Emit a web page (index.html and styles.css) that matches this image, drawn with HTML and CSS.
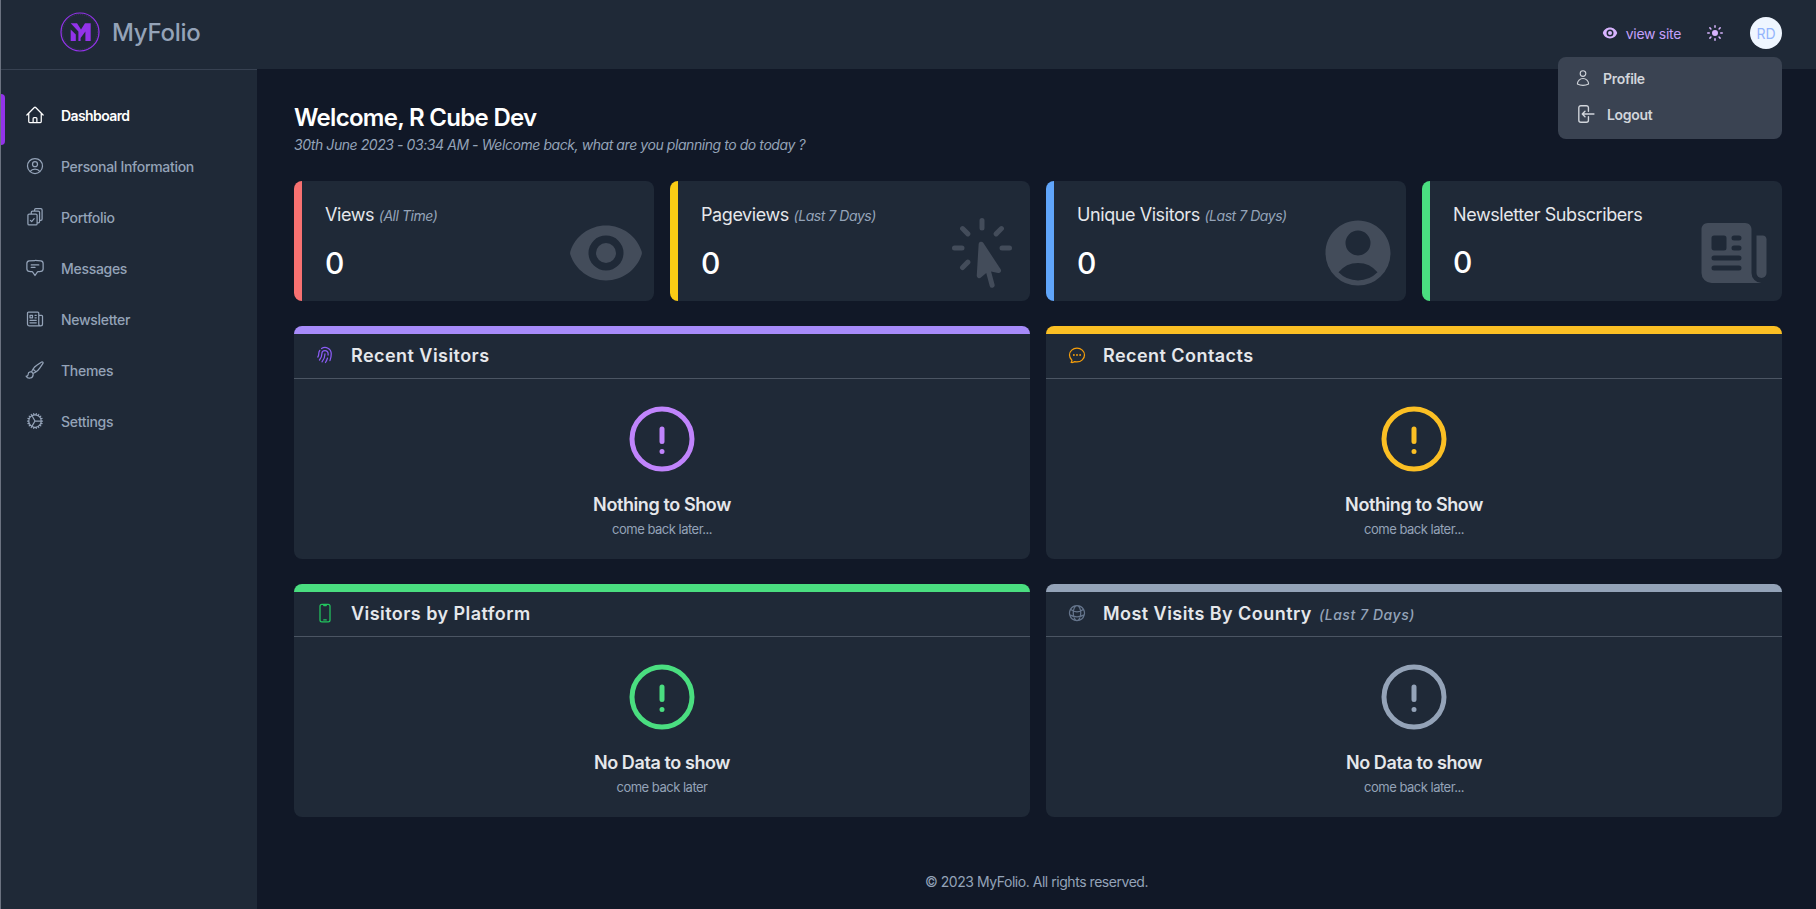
FILE: index.html
```html
<!DOCTYPE html>
<html lang="en">
<head>
    <meta charset="UTF-8">
    <meta name="viewport" content="width=device-width, initial-scale=1.0">
    <title>MyFolio - Dashboard</title>
    <link rel="stylesheet" href="styles.css">
</head>
<body>
    <aside class="sidebar">
        <div class="brand">
            <svg class="brand-logo" viewBox="0 0 40 40">
                <circle cx="20" cy="20" r="19" fill="none" stroke="#9333ea" stroke-width="1.2"/>
                <circle cx="20" cy="20" r="17.5" fill="none" stroke="#4b3a6b" stroke-width="0.6" stroke-dasharray="1 1"/>
                <polygon fill="#9333ea" points="10.7,17.5 15.8,22.5 15.8,29 10.7,29"/>
                <polygon fill="#9333ea" points="10.7,11.3 17,11.3 21,17.5 25,11.3 30.7,11.3 30.7,29 25.4,29 25.4,19.5 20.6,26 20.6,29 18.4,29 18.4,19.5"/>
            </svg>
            <span class="brand-name">MyFolio</span>
        </div>
        <nav class="nav">
            <a class="nav-item active">
                <svg class="icon" viewBox="0 0 24 24"><path d="M2.25 12l8.954-8.955c.44-.439 1.152-.439 1.591 0L21.75 12M4.5 9.75v10.125c0 .621.504 1.125 1.125 1.125H9.75v-4.875c0-.621.504-1.125 1.125-1.125h2.25c.621 0 1.125.504 1.125 1.125V21h4.125c.621 0 1.125-.504 1.125-1.125V9.75M8.25 21h8.25"/></svg>
                Dashboard
            </a>
            <a class="nav-item">
                <svg class="icon" viewBox="0 0 24 24"><path d="M17.982 18.725A7.488 7.488 0 0012 15.75a7.488 7.488 0 00-5.982 2.975m11.963 0a9 9 0 10-11.963 0m11.963 0A8.966 8.966 0 0112 21a8.966 8.966 0 01-5.982-2.275M15 9.75a3 3 0 11-6 0 3 3 0 016 0z"/></svg>
                Personal Information
            </a>
            <a class="nav-item">
                <svg class="icon" viewBox="0 0 24 24"><path d="M5 8.5h8a1.5 1.5 0 011.5 1.5v10a1.5 1.5 0 01-1.5 1.5H5A1.5 1.5 0 013.5 20V10A1.5 1.5 0 015 8.5zM6.5 16l1.5 1.5 3-3.5M7.5 8.5V6.5A1.5 1.5 0 019 5h7a1.5 1.5 0 011.5 1.5v11A1.5 1.5 0 0116 19h-1.5M11.5 5V3.5A1.5 1.5 0 0113 2h6a1.5 1.5 0 011.5 1.5v11A1.5 1.5 0 0119 16h-1.5"/></svg>
                Portfolio
            </a>
            <a class="nav-item">
                <svg class="icon" viewBox="0 0 24 24"><path d="M7.5 8.25h9m-9 3H12m-9.75 1.51c0 1.6 1.123 2.994 2.707 3.227 1.129.166 2.27.293 3.423.379.35.026.67.21.865.501L12 21l2.755-4.133a1.14 1.14 0 01.865-.501 48.172 48.172 0 003.423-.379c1.584-.233 2.707-1.626 2.707-3.228V6.741c0-1.602-1.123-2.995-2.707-3.228A48.394 48.394 0 0012 3c-2.392 0-4.744.175-7.043.513C3.373 3.746 2.25 5.14 2.25 6.741v6.018z"/></svg>
                Messages
            </a>
            <a class="nav-item">
                <svg class="icon" viewBox="0 0 24 24"><path d="M12 7.5h1.5m-1.5 3h1.5m-7.5 3h7.5m-7.5 3h7.5m3-9h3.375c.621 0 1.125.504 1.125 1.125V18a2.25 2.25 0 01-2.25 2.25M16.5 7.5V18a2.25 2.25 0 002.25 2.25M16.5 7.5V4.875c0-.621-.504-1.125-1.125-1.125H4.125C3.504 3.75 3 4.254 3 4.875V18a2.25 2.25 0 002.25 2.25h13.5M6 7.5h3v3H6v-3z"/></svg>
                Newsletter
            </a>
            <a class="nav-item">
                <svg class="icon" viewBox="0 0 24 24"><path d="M9.53 16.122a3 3 0 00-5.78 1.128 2.25 2.25 0 01-2.4 2.245 4.5 4.5 0 008.4-2.245c0-.399-.078-.78-.22-1.128zm0 0a15.998 15.998 0 003.388-1.62m-5.043-.025a15.994 15.994 0 011.622-3.395m3.42 3.42a15.995 15.995 0 004.764-4.648l3.876-5.814a1.151 1.151 0 00-1.597-1.597L14.146 6.32a15.996 15.996 0 00-4.649 4.763m3.42 3.42a6.776 6.776 0 00-3.42-3.42"/></svg>
                Themes
            </a>
            <a class="nav-item">
                <svg class="icon" viewBox="0 0 24 24"><path d="M4.5 12a7.5 7.5 0 0015 0m-15 0a7.5 7.5 0 1115 0m-15 0H3m16.5 0H21m-1.5 0H12m-8.457 3.077l1.41-.513m14.095-5.13l1.41-.513M5.106 17.785l1.15-.964m11.49-9.642l1.149-.964M7.501 19.795l.75-1.3m7.5-12.99l.75-1.3m-6.063 16.658l.26-1.477m2.605-14.772l.26-1.477m0 17.726l-.26-1.477M10.698 4.614l-.26-1.477M16.5 19.794l-.75-1.299M7.5 4.205L12 12m6.894 5.785l-1.149-.964M6.256 7.178l-1.15-.964m15.352 8.864l-1.41-.513M4.954 9.435l-1.41-.514M12.002 12l-3.75 6.495"/></svg>
                Settings
            </a>
        </nav>
    </aside>

    <div class="page">
        <header class="topbar">
            <a class="view-site">
                <svg class="view-eye" viewBox="0 0 24 24"><path d="M12 15a3 3 0 100-6 3 3 0 000 6z"/><path fill-rule="evenodd" d="M1.323 11.447C2.811 6.976 7.028 3.75 12.001 3.75c4.97 0 9.185 3.223 10.675 7.69.12.362.12.752 0 1.113-1.487 4.471-5.705 7.697-10.677 7.697-4.97 0-9.186-3.223-10.675-7.69a1.762 1.762 0 010-1.113zM17.25 12a5.25 5.25 0 11-10.5 0 5.25 5.25 0 0110.5 0z"/></svg>
                view site
            </a>
            <svg class="sun" viewBox="0 0 20 20"><path d="M10 2a.75.75 0 01.75.75v1.5a.75.75 0 01-1.5 0v-1.5A.75.75 0 0110 2zM10 15a.75.75 0 01.75.75v1.5a.75.75 0 01-1.5 0v-1.5A.75.75 0 0110 15zM10 7a3 3 0 100 6 3 3 0 000-6zM15.657 5.404a.75.75 0 10-1.06-1.06l-1.061 1.06a.75.75 0 001.06 1.06l1.06-1.06zM6.464 14.596a.75.75 0 10-1.06-1.06l-1.06 1.06a.75.75 0 001.06 1.06l1.06-1.06zM18 10a.75.75 0 01-.75.75h-1.5a.75.75 0 010-1.5h1.5A.75.75 0 0118 10zM5 10a.75.75 0 01-.75.75h-1.5a.75.75 0 010-1.5h1.5A.75.75 0 015 10zM14.596 15.657a.75.75 0 001.06-1.06l-1.06-1.061a.75.75 0 10-1.06 1.06l1.06 1.06zM5.404 6.464a.75.75 0 001.06-1.06l-1.06-1.06a.75.75 0 10-1.061 1.06l1.06 1.06z"/></svg>
            <div class="avatar">RD</div>
            <div class="dropdown">
                <a class="dropdown-item">
                    <svg class="icon-sm" viewBox="0 0 24 24"><path d="M15.75 6a3.75 3.75 0 11-7.5 0 3.75 3.75 0 017.5 0zM4.501 20.118a7.5 7.5 0 0114.998 0A17.933 17.933 0 0112 21.75c-2.676 0-5.216-.584-7.499-1.632z"/></svg>
                    Profile
                </a>
                <a class="dropdown-item">
                    <svg class="icon-logout" viewBox="0 0 24 24"><path d="M15.75 9V5.25A2.25 2.25 0 0013.5 3h-6a2.25 2.25 0 00-2.25 2.25v13.5A2.25 2.25 0 007.5 21h6a2.25 2.25 0 002.25-2.25V15M12 9l-3 3m0 0l3 3m-3-3h12.75"/></svg>
                    Logout
                </a>
            </div>
        </header>

        <main class="content">
            <h1 class="welcome">Welcome, R Cube Dev</h1>
            <p class="welcome-sub">30th June 2023 - 03:34 AM - Welcome back, what are you planning to do today ?</p>

            <section class="stats">
                <div class="stat stat-red">
                    <div class="stat-text">
                        <div class="stat-title">Views <em>(All Time)</em></div>
                        <div class="stat-value">0</div>
                    </div>
                    <svg class="stat-icon" viewBox="0 0 24 24"><path d="M12 15a3 3 0 100-6 3 3 0 000 6z"/><path fill-rule="evenodd" d="M1.323 11.447C2.811 6.976 7.028 3.75 12.001 3.75c4.97 0 9.185 3.223 10.675 7.69.12.362.12.752 0 1.113-1.487 4.471-5.705 7.697-10.677 7.697-4.97 0-9.186-3.223-10.675-7.69a1.762 1.762 0 010-1.113zM17.25 12a5.25 5.25 0 11-10.5 0 5.25 5.25 0 0110.5 0z"/></svg>
                </div>
                <div class="stat stat-yellow">
                    <div class="stat-text">
                        <div class="stat-title">Pageviews <em>(Last 7 Days)</em></div>
                        <div class="stat-value">0</div>
                    </div>
                    <svg class="stat-icon" viewBox="0 0 24 24"><path d="M12 1.5a.75.75 0 01.75.75V4.5a.75.75 0 01-1.5 0V2.25A.75.75 0 0112 1.5zM5.636 4.136a.75.75 0 011.06 0l1.592 1.591a.75.75 0 01-1.061 1.061l-1.591-1.591a.75.75 0 010-1.061zm12.728 0a.75.75 0 010 1.06l-1.591 1.592a.75.75 0 01-1.061-1.061l1.591-1.591a.75.75 0 011.061 0zm-6.816 4.496a.75.75 0 01.82.311l5.228 7.917a.75.75 0 01-.777 1.148l-2.097-.43 1.045 3.9a.75.75 0 01-1.45.388l-1.044-3.899-1.601 1.42a.75.75 0 01-1.247-.606l.569-9.47a.75.75 0 01.554-.68zM3 10.5a.75.75 0 01.75-.75H6a.75.75 0 010 1.5H3.75A.75.75 0 013 10.5zm14.25 0a.75.75 0 01.75-.75h2.25a.75.75 0 010 1.5H18a.75.75 0 01-.75-.75zm-8.962 3.712a.75.75 0 010 1.061l-1.591 1.591a.75.75 0 11-1.061-1.06l1.591-1.592a.75.75 0 011.061 0z"/></svg>
                </div>
                <div class="stat stat-blue">
                    <div class="stat-text">
                        <div class="stat-title">Unique Visitors <em>(Last 7 Days)</em></div>
                        <div class="stat-value">0</div>
                    </div>
                    <svg class="stat-icon" viewBox="0 0 24 24"><path fill-rule="evenodd" d="M18.685 19.097A9.723 9.723 0 0021.75 12c0-5.385-4.365-9.75-9.75-9.75S2.25 6.615 2.25 12a9.723 9.723 0 003.065 7.097A9.716 9.716 0 0012 21.75a9.716 9.716 0 006.685-2.653zm-12.54-1.285A7.486 7.486 0 0112 15a7.486 7.486 0 015.855 2.812A8.224 8.224 0 0112 20.25a8.224 8.224 0 01-5.855-2.438zM15.75 9a3.75 3.75 0 11-7.5 0 3.75 3.75 0 017.5 0z"/></svg>
                </div>
                <div class="stat stat-green">
                    <div class="stat-text">
                        <div class="stat-title">Newsletter Subscribers</div>
                        <div class="stat-value">0</div>
                    </div>
                    <svg class="stat-icon" viewBox="0 0 24 24"><path fill-rule="evenodd" d="M4.125 3C3.089 3 2.25 3.84 2.25 4.875V18a3 3 0 003 3h15a3 3 0 01-3-3V4.875C17.25 3.839 16.41 3 15.375 3H4.125zM12 9.75a.75.75 0 000 1.5h1.5a.75.75 0 000-1.5H12zm-.75-2.25a.75.75 0 01.75-.75h1.5a.75.75 0 010 1.5H12a.75.75 0 01-.75-.75zM6 12.75a.75.75 0 000 1.5h7.5a.75.75 0 000-1.5H6zm-.75 3.75a.75.75 0 01.75-.75h7.5a.75.75 0 010 1.5H6a.75.75 0 01-.75-.75zM6 6.75a.75.75 0 00-.75.75v3c0 .414.336.75.75.75h3a.75.75 0 00.75-.75v-3A.75.75 0 009 6.75H6z"/><path d="M18.75 6.75h1.875c.621 0 1.125.504 1.125 1.125V18a1.5 1.5 0 01-3 0V6.75z"/></svg>
                </div>
            </section>

            <section class="panels">
                <div class="panel panel-purple">
                    <div class="panel-head">
                        <svg class="panel-icon" viewBox="0 0 24 24"><path d="M7.864 4.243A7.5 7.5 0 0119.5 10.5c0 2.92-.556 5.709-1.568 8.268M5.742 6.364A7.465 7.465 0 004.5 10.5a7.464 7.464 0 01-1.15 3.993m1.989 3.559A11.209 11.209 0 008.25 10.5a3.75 3.75 0 117.5 0c0 .527-.021 1.049-.064 1.565M12 10.5a14.94 14.94 0 01-3.6 9.75m6.633-4.596a18.666 18.666 0 01-2.485 5.33"/></svg>
                        <h2>Recent Visitors</h2>
                    </div>
                    <div class="panel-body">
                        <svg class="empty-icon" viewBox="0 0 24 24"><path d="M12 9v3.75m9-.75a9 9 0 11-18 0 9 9 0 0118 0zm-9 3.75h.008v.008H12v-.008z"/></svg>
                        <div class="empty-title">Nothing to Show</div>
                        <div class="empty-sub">come back later...</div>
                    </div>
                </div>
                <div class="panel panel-amber">
                    <div class="panel-head">
                        <svg class="panel-icon" viewBox="0 0 24 24"><path d="M8.625 12a.375.375 0 11-.75 0 .375.375 0 01.75 0zm0 0H8.25m4.125 0a.375.375 0 11-.75 0 .375.375 0 01.75 0zm0 0H12m4.125 0a.375.375 0 11-.75 0 .375.375 0 01.75 0zm0 0h-.375M21 12c0 4.556-4.03 8.25-9 8.25a9.764 9.764 0 01-2.555-.337A5.972 5.972 0 015.41 20.97a5.969 5.969 0 01-.474-.065 4.48 4.48 0 00.978-2.025c.09-.457-.133-.901-.467-1.226C3.93 16.178 3 14.189 3 12c0-4.556 4.03-8.25 9-8.25s9 3.694 9 8.25z"/></svg>
                        <h2>Recent Contacts</h2>
                    </div>
                    <div class="panel-body">
                        <svg class="empty-icon" viewBox="0 0 24 24"><path d="M12 9v3.75m9-.75a9 9 0 11-18 0 9 9 0 0118 0zm-9 3.75h.008v.008H12v-.008z"/></svg>
                        <div class="empty-title">Nothing to Show</div>
                        <div class="empty-sub">come back later...</div>
                    </div>
                </div>
                <div class="panel panel-green">
                    <div class="panel-head">
                        <svg class="panel-icon" viewBox="0 0 24 24"><path d="M10.5 1.5H8.25A2.25 2.25 0 006 3.75v16.5a2.25 2.25 0 002.25 2.25h7.5A2.25 2.25 0 0018 20.25V3.75a2.25 2.25 0 00-2.25-2.25H13.5m-3 0V3h3V1.5m-3 0h3m-3 18.75h3"/></svg>
                        <h2>Visitors by Platform</h2>
                    </div>
                    <div class="panel-body">
                        <svg class="empty-icon" viewBox="0 0 24 24"><path d="M12 9v3.75m9-.75a9 9 0 11-18 0 9 9 0 0118 0zm-9 3.75h.008v.008H12v-.008z"/></svg>
                        <div class="empty-title">No Data to show</div>
                        <div class="empty-sub">come back later</div>
                    </div>
                </div>
                <div class="panel panel-slate">
                    <div class="panel-head">
                        <svg class="panel-icon" viewBox="0 0 24 24"><path d="M12 21a9.004 9.004 0 008.716-6.747M12 21a9.004 9.004 0 01-8.716-6.747M12 21c2.485 0 4.5-4.03 4.5-9S14.485 3 12 3m0 18c-2.485 0-4.5-4.03-4.5-9S9.515 3 12 3m0 0a8.997 8.997 0 017.843 4.582M12 3a8.997 8.997 0 00-7.843 4.582m15.686 0A11.953 11.953 0 0112 10.5c-2.998 0-5.74-1.1-7.843-2.918m15.686 0A8.959 8.959 0 0121 12c0 .778-.099 1.533-.284 2.253m0 0A17.919 17.919 0 0112 16.5c-3.162 0-6.133-.815-8.716-2.247m0 0A9.015 9.015 0 013 12c0-1.605.42-3.113 1.157-4.418"/></svg>
                        <h2>Most Visits By Country <em>(Last 7 Days)</em></h2>
                    </div>
                    <div class="panel-body">
                        <svg class="empty-icon" viewBox="0 0 24 24"><path d="M12 9v3.75m9-.75a9 9 0 11-18 0 9 9 0 0118 0zm-9 3.75h.008v.008H12v-.008z"/></svg>
                        <div class="empty-title">No Data to show</div>
                        <div class="empty-sub">come back later...</div>
                    </div>
                </div>
            </section>
        </main>

        <footer class="footer">© 2023 MyFolio. All rights reserved.</footer>
    </div>
</body>
</html>
```

FILE: styles.css
```css
* {
    box-sizing: border-box;
}

body {
    margin: 0;
    min-height: 909px;
    display: flex;
    background: #111827;
    font-family: "Inter", "Noto Sans", sans-serif;
    color: #e5e7eb;
}

svg {
    display: block;
    flex-shrink: 0;
}

/* sidebar */
.sidebar {
    width: 257px;
    flex-shrink: 0;
    background: #1f2937;
    border-left: 1px solid #6b7280;
}

.brand {
    height: 70px;
    display: flex;
    align-items: center;
    padding: 0 0 5px 59px;
    border-bottom: 1px solid #374151;
}

.brand-logo {
    width: 40px;
    height: 40px;
}

.brand-name {
    margin-left: 12px;
    font-size: 24px;
    font-weight: 500;
    letter-spacing: -0.25px;
    color: #94a3b8;
}

.nav {
    padding-top: 24px;
}

.nav-item {
    height: 51px;
    display: flex;
    align-items: center;
    gap: 16px;
    padding: 0 0 9px 24px;
    font-size: 14px;
    font-weight: 500;
    letter-spacing: -0.3px;
    color: #94a3b8;
    position: relative;
}

.nav-item.active {
    color: #ffffff;
    font-weight: 600;
    letter-spacing: -0.6px;
}

.nav-item.active::before {
    content: "";
    position: absolute;
    left: 0;
    top: 0;
    bottom: 0;
    width: 4px;
    background: #9333ea;
    border-radius: 0 4px 4px 0;
}

.icon {
    width: 20px;
    height: 20px;
    fill: none;
    stroke: currentColor;
    stroke-width: 1.5;
    stroke-linecap: round;
    stroke-linejoin: round;
}

/* top bar */
.page {
    flex: 1;
    min-width: 0;
    display: flex;
    flex-direction: column;
}

.topbar {
    height: 69px;
    background: #1f2937;
    display: flex;
    align-items: center;
    justify-content: flex-end;
    padding: 0 34px 3px 0;
    position: relative;
}

.view-site {
    display: flex;
    align-items: center;
    gap: 8px;
    font-size: 14px;
    letter-spacing: -0.3px;
    color: #c4a0fb;
}

.view-eye {
    width: 16px;
    height: 16px;
    fill: #d8b4fe;
}

.sun {
    width: 20px;
    height: 20px;
    margin-left: 24px;
    fill: #d8b4fe;
}

.avatar {
    width: 32px;
    height: 32px;
    margin-left: 25px;
    border-radius: 50%;
    background: #eff6ff;
    color: #93b4fc;
    font-size: 14px;
    display: flex;
    align-items: center;
    justify-content: center;
}

.dropdown {
    position: absolute;
    top: 57px;
    right: 34px;
    width: 224px;
    height: 82px;
    padding-top: 3px;
    background: #3a4352;
    border-radius: 8px;
}

.dropdown-item {
    height: 36px;
    display: flex;
    align-items: center;
    gap: 11px;
    padding-left: 16px;
    font-size: 14px;
    font-weight: 600;
    letter-spacing: -0.3px;
    color: #d1d5db;
}

.icon-sm,
.icon-logout {
    fill: none;
    stroke: #d1d5db;
    stroke-width: 1.5;
    stroke-linecap: round;
    stroke-linejoin: round;
}

.icon-sm {
    width: 18px;
    height: 18px;
}

.icon-logout {
    width: 22px;
    height: 22px;
}

/* main */
.content {
    padding: 33px 34px 0 37px;
}

.welcome {
    margin: 0;
    font-size: 24px;
    line-height: 32px;
    font-weight: 600;
    letter-spacing: -0.7px;
    color: #ffffff;
}

.welcome-sub {
    margin: 1px 0 0;
    font-size: 14px;
    line-height: 20px;
    font-style: italic;
    letter-spacing: -0.43px;
    color: #94a3b8;
}

.stats {
    display: grid;
    grid-template-columns: repeat(4, 1fr);
    gap: 16px;
    margin-top: 26px;
}

.stat {
    height: 120px;
    display: flex;
    justify-content: space-between;
    padding: 20px 8px 8px 23px;
    background: #1f2937;
    border-left: 8px solid;
    border-radius: 8px;
}

.stat-red { border-left-color: #f87171; }
.stat-yellow { border-left-color: #facc15; }
.stat-blue { border-left-color: #60a5fa; }
.stat-green { border-left-color: #4ade80; }

.stat-title {
    font-size: 18px;
    line-height: 28px;
    letter-spacing: -0.42px;
    color: #e5e7eb;
    white-space: nowrap;
}

.stat-title em {
    font-size: 14px;
    letter-spacing: -0.45px;
    color: #94a3b8;
}

.stat-value {
    margin-top: 15px;
    font-size: 30px;
    line-height: 36px;
    font-weight: 500;
    color: #ffffff;
}

.stat-icon {
    width: 80px;
    height: 80px;
    align-self: flex-end;
    fill: #434c5a;
}

.panels {
    display: grid;
    grid-template-columns: repeat(2, 1fr);
    gap: 25px 16px;
    margin-top: 25px;
}

.panel {
    height: 233px;
    background: #1f2937;
    border-top: 8px solid;
    border-radius: 8px;
}

.panel-purple { border-top-color: #a78bfa; }
.panel-amber { border-top-color: #fbbf24; }
.panel-green { border-top-color: #4ade80; }
.panel-slate { border-top-color: #94a3b8; }

.panel-head {
    height: 45px;
    display: flex;
    align-items: center;
    gap: 16px;
    padding: 0 0 2px 21px;
    border-bottom: 1px solid #4b5563;
}

.panel-head h2 {
    margin: 0;
    font-size: 18px;
    font-weight: 600;
    letter-spacing: 0.45px;
    color: #e5e7eb;
}

.panel-head em {
    font-size: 14px;
    font-weight: 500;
    letter-spacing: 0.55px;
    margin-left: 2px;
    color: #94a3b8;
}

.panel-icon {
    width: 20px;
    height: 20px;
    fill: none;
    stroke-width: 1.5;
    stroke-linecap: round;
    stroke-linejoin: round;
}

.panel-purple .panel-icon { stroke: #8b5cf6; }
.panel-amber .panel-icon { stroke: #f59e0b; }
.panel-green .panel-icon { stroke: #22c55e; }
.panel-slate .panel-icon { stroke: #64748b; }

.panel-body {
    display: flex;
    flex-direction: column;
    align-items: center;
    padding-top: 20px;
}

.empty-icon {
    width: 80px;
    height: 80px;
    fill: none;
    stroke-width: 1.5;
    stroke-linecap: round;
    stroke-linejoin: round;
}

.panel-purple .empty-icon { stroke: #c084fc; }
.panel-amber .empty-icon { stroke: #fbbf24; }
.panel-green .empty-icon { stroke: #4ade80; }
.panel-slate .empty-icon { stroke: #94a3b8; }

.empty-title {
    margin-top: 12px;
    font-size: 18px;
    line-height: 28px;
    font-weight: 600;
    letter-spacing: -0.4px;
    color: #e5e7eb;
}

.empty-sub {
    font-size: 13px;
    line-height: 20px;
    letter-spacing: -0.5px;
    color: #94a3b8;
}

.footer {
    margin-top: 55px;
    text-align: center;
    font-size: 14px;
    line-height: 20px;
    letter-spacing: -0.46px;
    color: #94a3b8;
}
```
